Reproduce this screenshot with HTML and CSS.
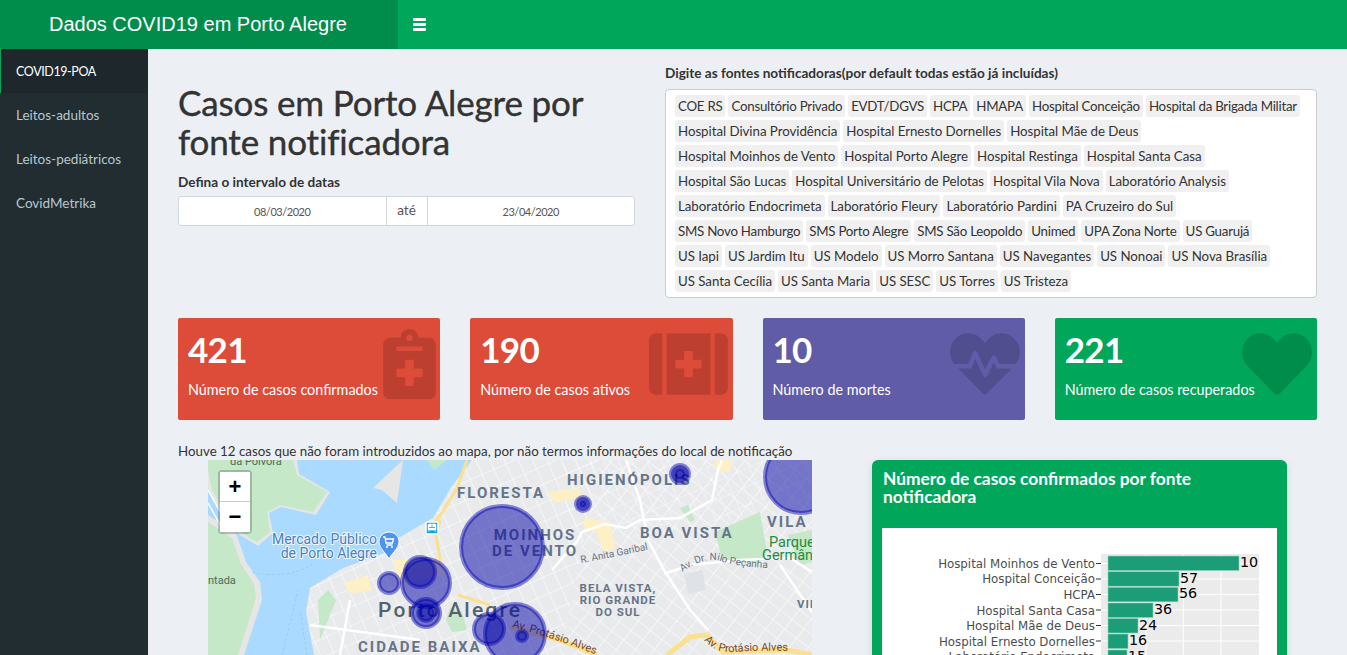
FILE: index.html
```html
<!DOCTYPE html>
<html lang="pt-BR">
<head>
  <meta charset="UTF-8">
  <title>Dados COVID19 em Porto Alegre</title>
  <meta name="viewport" content="width=device-width, initial-scale=1.0">
  <link rel="stylesheet" href="styles.css">
</head>
<body>

  <header class="navbar">
    <div class="brand">Dados COVID19 em Porto Alegre</div>
    <a class="toggle" href="#"><span></span><span></span><span></span></a>
  </header>

  <div class="wrapper">
    <nav class="sidebar">
      <a class="active" href="#">COVID19-POA</a>
      <a href="#">Leitos-adultos</a>
      <a href="#">Leitos-pediátricos</a>
      <a href="#">CovidMetrika</a>
    </nav>

    <main class="content">
      <section class="top-row">
        <div>
          <h1>Casos em Porto Alegre por fonte notificadora</h1>
          <label class="field-label">Defina o intervalo de datas</label>
          <div class="date-range">
            <div class="date-input">08/03/2020</div>
            <div class="date-sep">até</div>
            <div class="date-input">23/04/2020</div>
          </div>
        </div>
        <div>
          <label class="field-label label-tags">Digite as fontes notificadoras(por default todas estão já incluídas)</label>
          <div class="tags">
            <div class="tag-row tight"><span>COE RS</span><span>Consultório Privado</span><span>EVDT/DGVS</span><span>HCPA</span><span>HMAPA</span><span>Hospital Conceição</span><span>Hospital da Brigada Militar</span></div>
            <div class="tag-row"><span>Hospital Divina Providência</span><span>Hospital Ernesto Dornelles</span><span>Hospital Mãe de Deus</span></div>
            <div class="tag-row"><span>Hospital Moinhos de Vento</span><span>Hospital Porto Alegre</span><span>Hospital Restinga</span><span>Hospital Santa Casa</span></div>
            <div class="tag-row"><span>Hospital São Lucas</span><span>Hospital Universitário de Pelotas</span><span>Hospital Vila Nova</span><span>Laboratório Analysis</span></div>
            <div class="tag-row"><span>Laboratório Endocrimeta</span><span>Laboratório Fleury</span><span>Laboratório Pardini</span><span>PA Cruzeiro do Sul</span></div>
            <div class="tag-row tight"><span>SMS Novo Hamburgo</span><span>SMS Porto Alegre</span><span>SMS São Leopoldo</span><span>Unimed</span><span>UPA Zona Norte</span><span>US Guarujá</span></div>
            <div class="tag-row"><span>US Iapi</span><span>US Jardim Itu</span><span>US Modelo</span><span>US Morro Santana</span><span>US Navegantes</span><span>US Nonoai</span><span>US Nova Brasília</span></div>
            <div class="tag-row"><span>US Santa Cecília</span><span>US Santa Maria</span><span>US SESC</span><span>US Torres</span><span>US Tristeza</span></div>
          </div>
        </div>
      </section>

      <section class="stats">
        <div class="stat red">
          <strong>421</strong>
          <p>Número de casos confirmados</p>
          <svg class="stat-icon icon-notes" viewBox="0 0 384 512"><path d="M336 64h-80c0-35.3-28.7-64-64-64s-64 28.7-64 64H48C21.5 64 0 85.5 0 112v352c0 26.5 21.5 48 48 48h288c26.5 0 48-21.5 48-48V112c0-26.5-21.5-48-48-48zM192 40c13.3 0 24 10.7 24 24s-10.7 24-24 24-24-10.7-24-24 10.7-24 24-24zm96 304c0 4.4-3.6 8-8 8h-56v56c0 4.4-3.6 8-8 8h-48c-4.4 0-8-3.6-8-8v-56h-56c-4.4 0-8-3.6-8-8v-48c0-4.4 3.6-8 8-8h56v-56c0-4.4 3.6-8 8-8h48c4.4 0 8 3.6 8 8v56h56c4.4 0 8 3.6 8 8v48zm0-192c0 4.4-3.6 8-8 8H104c-4.4 0-8-3.6-8-8v-16c0-4.4 3.6-8 8-8h176c4.4 0 8 3.6 8 8v16z"/></svg>
        </div>
        <div class="stat red">
          <strong>190</strong>
          <p>Número de casos ativos</p>
          <svg class="stat-icon icon-aid" viewBox="0 0 576 512"><path d="M0 80v352c0 26.5 21.5 48 48 48h48V32H48C21.5 32 0 53.5 0 80zm128 400h320V32H128v448zm64-248c0-4.4 3.6-8 8-8h56v-56c0-4.4 3.6-8 8-8h48c4.4 0 8 3.6 8 8v56h56c4.4 0 8 3.6 8 8v48c0 4.4-3.6 8-8 8h-56v56c0 4.4-3.6 8-8 8h-48c-4.4 0-8-3.6-8-8v-56h-56c-4.4 0-8-3.6-8-8v-48zM528 32h-48v448h48c26.5 0 48-21.5 48-48V80c0-26.5-21.5-48-48-48z"/></svg>
        </div>
        <div class="stat purple">
          <strong>10</strong>
          <p>Número de mortes</p>
          <svg class="stat-icon icon-heart" viewBox="0 0 512 512"><path d="M320.2 243.8l-49.7 99.4c-6 12.1-23.4 11.7-28.9-.6l-56.9-126.3-30 71.7H60.6l182.5 186.5c7.1 7.3 18.6 7.3 25.7 0L451.4 288H342.3l-22.1-44.2zM473.7 73.9l-2.4-2.5c-51.5-52.6-135.8-52.6-187.4 0L256 100l-27.9-28.5c-51.5-52.7-135.9-52.7-187.4 0l-2.4 2.4C-10.4 123.7-12.5 203 31 256h102.4l35.9-86.2c5.4-12.9 23.6-13.2 29.4-.4l58.2 129.3 49-97.9c5.9-11.8 22.7-11.8 28.6 0l27.6 55.2H481c43.5-53 41.4-132.3-7.3-182.1z"/></svg>
        </div>
        <div class="stat green">
          <strong>221</strong>
          <p>Número de casos recuperados</p>
          <svg class="stat-icon icon-heart" viewBox="0 0 512 512"><path d="M462.3 62.6C407.5 15.9 326 24.3 275.7 76.2L256 96.5l-19.7-20.3C186.1 24.3 104.5 15.9 49.7 62.6c-62.8 53.6-66.1 149.8-9.9 207.9l193.5 199.8c12.5 12.9 32.8 12.9 45.3 0l193.5-199.8c56.3-58.1 53-154.3-9.8-207.9z"/></svg>
        </div>
      </section>

      <p class="map-note">Houve 12 casos que não foram introduzidos ao mapa, por não termos informações do local de notificação</p>

      <section class="bottom-row">
        <div class="map">
          <svg class="map-svg" viewBox="208 460 604 195" width="604" height="195">
            <defs>
              <pattern id="streets" width="13" height="17" patternUnits="userSpaceOnUse" patternTransform="rotate(-24)">
                <path d="M0 0H13M0 0V17" stroke="#fff" stroke-width="1.1" fill="none"/>
              </pattern>
              <pattern id="streets2" width="15" height="12" patternUnits="userSpaceOnUse" patternTransform="rotate(38)">
                <path d="M0 0H15M0 0V12" stroke="#fff" stroke-width="1.1" fill="none"/>
              </pattern>
              <path id="p-anita" d="M581 563 Q610 558 650 549"/>
              <path id="p-nilo" d="M682 572 Q705 556 720 561 T765 568"/>
              <path id="p-alves1" d="M512 627 Q555 638 610 660"/>
              <path id="p-alves2" d="M704 640 Q716 654 735 652 T800 651"/>
            </defs>

            <rect x="208" y="460" width="604" height="195" fill="#aadaff"/>

            <!-- margem esquerda -->
            <path d="M226 460H297L299 474 330 492 316 515 281 507 269 513 273 533 258 546 232 530 208 490V460Z" fill="#e6e6e4"/>
            <path d="M230 460H293L297 475 327 492 313 512 280 505 267 512 270 532 257 542 233 528 212 490 208 470V460Z" fill="#c4e8c8"/>
            <path d="M208 515 236 533 246 562 260 582 262 600 244 655H208Z" fill="#e6e6e4"/>
            <path d="M208 522 232 538 241 564 254 584 256 598 238 655H208Z" fill="#c4e8c8"/>
            <path d="M208 490 226 522M208 503 222 528" stroke="#fff" stroke-width="1.5" fill="none"/>
            <path d="M373 488 403 460 397 503 382 490Z" fill="#e6e6e4"/>
            <path d="M427 460H447L434 470Z" fill="#c4e8c8"/>
            <path d="M307 655 300 610" stroke="#9accf2" stroke-width="1" stroke-dasharray="3 2" fill="none"/>
            <path d="M252 572Q285 580 312 565M282 655 298 590" stroke="#9accf2" stroke-width="1" stroke-dasharray="3 2" fill="none"/>

            <!-- cidade -->
            <path id="land" d="M472 460 452 486 433 518 395 540 387 552 343 568 310 588 306 612 314 655H812V460Z" fill="#e9eaec"/>
            <path d="M472 460 452 486 433 518 395 540 387 552 343 568 310 588 306 612 314 655H560L600 460Z" fill="url(#streets)"/>
            <path d="M600 460H812V655H560Z" fill="url(#streets2)"/>
            <path d="M562 460H812V500L640 540 560 520Z" fill="url(#streets)" opacity=".7"/>

            <!-- parques e areas comerciais -->
            <path d="M715 532 760 512 767 552 760 563 723 562Z" fill="#c4e8c8"/>
            <path d="M788 535 812 530V562L800 565Z" fill="#c4e8c8"/>
            <path d="M680 508 688 505 695 520 690 522Z" fill="#c4e8c8"/>
            <path d="M450 608 462 612 467 630 452 632 446 620Z" fill="#c4e8c8"/>
            <path d="M318 600 328 590 336 600 320 640Z" fill="#c4e8c8"/>
            <path d="M547 492 578 488 584 497 555 503ZM584 518 610 522 615 548 604 552 596 532 584 530Z" fill="#fdf0c4"/>
            <path d="M344 583 368 575 372 590 350 594ZM394 560 440 558 445 575 398 585Z" fill="#fdf0c4"/>
            <path d="M715 460H732L730 472 716 470Z" fill="#fdf0c4"/>
            <path d="M684 574 702 570 706 590 688 594Z" fill="#dfe3e7"/>

            <!-- ruas principais -->
            <path d="M582 532 605 524 626 528 640 520 680 518 712 500 718 470 722 460M626 460 640 500 648 540 664 570 690 610 708 630M664 574 690 565 740 560 790 558 812 572M552 570 578 540 582 532M310 625 420 640M812 612 780 565M340 655 350 600" stroke="#fff" stroke-width="2.5" fill="none"/>
            <path d="M467 460 457 488 442 513 428 530M440 520 436 535 441 565M458 595 490 605" stroke="#fbe08f" stroke-width="3" fill="none"/>
            <path d="M667 655 690 637 707 635 723 652 787 650 812 655M510 627 560 640 597 655" stroke="#fbe08f" stroke-width="5" fill="none"/>

            <!-- rotulos -->
            <g class="map-district">
              <text x="457" y="498">FLORESTA</text>
              <text x="567" y="485">HIGIENÓPOLIS</text>
              <text x="640" y="538">BOA VISTA</text>
              <text x="767" y="527">VILA</text>
              <text x="535" y="540" text-anchor="middle">MOINHOS</text>
              <text x="535" y="556" text-anchor="middle">DE VENTO</text>
              <text x="358" y="652">CIDADE BAIXA</text>
            </g>
            <g class="map-small">
              <text x="618" y="592" text-anchor="middle">BELA VISTA,</text>
              <text x="618" y="604" text-anchor="middle">RIO GRANDE</text>
              <text x="618" y="616" text-anchor="middle">DO SUL</text>
              <text x="797" y="608">VIL</text>
            </g>
            <text x="378" y="617" class="map-city">Porto Alegre</text>
            <text class="map-road"><textPath href="#p-anita">R. Anita Garibaldi</textPath></text>
            <text class="map-road"><textPath href="#p-nilo">Av. Dr. Nilo Peçanha</textPath></text>
            <text class="map-alves"><textPath href="#p-alves1">Av. Protásio Alves</textPath></text>
            <text class="map-alves"><textPath href="#p-alves2">Av. Protásio Alves</textPath></text>
            <text x="377" y="544" class="map-poi" text-anchor="end">Mercado Público</text>
            <text x="377" y="558" class="map-poi" text-anchor="end">de Porto Alegre</text>
            <text x="769" y="547" class="map-park">Parque</text>
            <text x="762" y="560" class="map-park">Germânia</text>
            <text x="208" y="584" class="map-hood">ntada</text>
            <text x="230" y="465" class="map-hood">da Pólvora</text>

            <!-- pin e transporte -->
            <path d="M389 532c-5.500 0-10 4.300-10 9.700 0 6.500 7.500 12 10 17.300 2.500-5.300 10-10.800 10-17.300 0-5.400-4.500-9.700-10-9.700Z" fill="#4e94ef" stroke="#fff" stroke-width="1"/>
            <path d="M383 537h2l1 6h6.500l1-4h-8M386.500 545h6" stroke="#fff" stroke-width="1.300" fill="none"/>
            <circle cx="387" cy="547" r="1" fill="#fff"/>
            <circle cx="392" cy="547" r="1" fill="#fff"/>
            <rect x="426" y="522" width="12" height="12" rx="1.500" fill="#0aa5f0" stroke="#fff" stroke-width="1.500"/>
            <path d="M429 524h6a1 1 0 0 1 1 1v5h-8v-5a1 1 0 0 1 1-1ZM429.500 530l-1 2M434.500 530l1 2" fill="#fff" stroke="#fff" stroke-width=".6"/>
            <path d="M432 524.500v3M429 527.500h6" stroke="#0aa5f0" stroke-width=".8"/>

            <!-- casos -->
            <g class="cases">
              <circle cx="502" cy="547" r="41"/>
              <circle cx="801" cy="477" r="36"/>
              <circle cx="680" cy="474" r="9"/>
              <circle cx="680" cy="474" r="5"/>
              <circle cx="583" cy="504" r="7"/>
              <circle cx="583" cy="504" r="3"/>
              <circle cx="389" cy="583" r="10"/>
              <circle cx="426" cy="583" r="24"/>
              <circle cx="420" cy="572" r="15"/>
              <circle cx="426" cy="613" r="14"/>
              <circle cx="426" cy="613" r="8"/>
              <circle cx="489" cy="629" r="15"/>
              <circle cx="515" cy="634" r="30"/>
              <circle cx="522" cy="636" r="5"/>
            </g>
          </svg>
          <div class="zoom-control">
            <a href="#">+</a>
            <a href="#">−</a>
          </div>
        </div>

        <div class="chart-card">
          <h3>Número de casos confirmados por fonte notificadora</h3>
          <div class="chart-box">
            <svg class="chart-svg" viewBox="882 528 395 300" width="395" height="300">
              <rect x="1101" y="554" width="158" height="274" fill="#ebebeb"/>
              <path d="M1146 554V828M1183.300 554V828M1221 554V828" stroke="#fff" stroke-width="1"/>
              <g stroke="#fff" stroke-width="1">
                <path d="M1101 563.500H1259M1101 579H1259M1101 594.500H1259M1101 610H1259M1101 625.500H1259M1101 641H1259M1101 656.500H1259"/>
              </g>
              <g fill="#1b9e77" stroke="#8fd0bb" stroke-width=".6">
                <rect x="1108" y="556" width="131" height="14.500"/>
                <rect x="1108" y="571.700" width="71" height="14.500"/>
                <rect x="1108" y="587.300" width="70" height="14.500"/>
                <rect x="1108" y="603" width="45" height="14.500"/>
                <rect x="1108" y="618.500" width="30" height="14.500"/>
                <rect x="1108" y="634" width="20" height="14.500"/>
                <rect x="1108" y="650" width="19" height="14.500"/>
              </g>
              <g class="chart-ticks" stroke="#333" stroke-width="1">
                <path d="M1096 563.500H1101M1096 579H1101M1096 594.500H1101M1096 610H1101M1096 625.500H1101M1096 641H1101M1096 656.500H1101"/>
              </g>
              <g class="chart-labels" text-anchor="end">
                <text x="1095" y="568">Hospital Moinhos de Vento</text>
                <text x="1095" y="583">Hospital Conceição</text>
                <text x="1095" y="599">HCPA</text>
                <text x="1095" y="615">Hospital Santa Casa</text>
                <text x="1095" y="630">Hospital Mãe de Deus</text>
                <text x="1095" y="646">Hospital Ernesto Dornelles</text>
                <text x="1095" y="661">Laboratório Endocrimeta</text>
              </g>
              <g class="chart-values">
                <text x="1240" y="567">10</text>
                <text x="1180" y="583">57</text>
                <text x="1179" y="598">56</text>
                <text x="1154" y="614">36</text>
                <text x="1139" y="630">24</text>
                <text x="1129" y="645">16</text>
                <text x="1128" y="661">15</text>
              </g>
            </svg>
          </div>
        </div>
      </section>
    </main>
  </div>

</body>
</html>
```

FILE: styles.css
```css
* { box-sizing: border-box; }
html, body { height: 100%; }
body {
  margin: 0;
  overflow: hidden;
  font-family: Lato, "Noto Sans", sans-serif;
  font-size: 14px;
  color: #333;
  background: #ecf0f5;
}
a { text-decoration: none; }

/* navbar */
.navbar {
  display: flex;
  height: 49px;
  background: #00a65a;
}
.brand {
  width: 398px;
  padding-left: 49px;
  background: #008d4c;
  color: #fff;
  font-family: "Liberation Sans", Arial, sans-serif;
  font-size: 20px;
  line-height: 49px;
}
.toggle {
  display: flex;
  flex-direction: column;
  justify-content: center;
  gap: 2px;
  width: 44px;
  padding-left: 15px;
}
.toggle span {
  display: block;
  width: 13px;
  height: 3px;
  border-radius: 1px;
  background: #fff;
}

/* sidebar */
.wrapper {
  display: flex;
  height: calc(100% - 49px);
}
.sidebar {
  flex: 0 0 148px;
  background: #222d32;
}
.sidebar a {
  display: block;
  height: 44px;
  padding-left: 16px;
  color: #b8c7ce;
  font-size: 13.500px;
  line-height: 44px;
}
.sidebar a.active {
  background: #1e282c;
  border-left: 1px solid #00a65a;
  padding-left: 15px;
  color: #fff;
  font-size: 12.500px;
  letter-spacing: -.4px;
  line-height: 45px;
}

/* content */
.content {
  flex: 1;
  min-width: 0;
  height: 100%;
  overflow: hidden;
  padding: 15px 30px 0;
}
.top-row {
  display: grid;
  grid-template-columns: 457px 652px;
  gap: 30px;
}
h1 {
  margin: 19px 0 12px;
  font-size: 35px;
  font-weight: 400;
  line-height: 39px;
  letter-spacing: -.15px;
  -webkit-text-stroke: .4px #333;
}
.field-label {
  display: block;
  height: 20px;
  margin-bottom: 3px;
  font-size: 13.600px;
  font-weight: 700;
  line-height: 18px;
}
.label-tags { margin-bottom: 5px; }
.date-range {
  display: flex;
  height: 30px;
  margin-top: 2px;
  background: #fff;
  border: 1px solid #d2d6de;
  border-radius: 3px;
  text-align: center;
}
.date-input {
  flex: 1;
  font-size: 11px;
  letter-spacing: -.45px;
  line-height: 29px;
  color: #555;
}
.date-sep {
  width: 42px;
  border-left: 1px solid #d2d6de;
  border-right: 1px solid #d2d6de;
  font-size: 13.500px;
  line-height: 27px;
  color: #555;
}
.tags {
  display: flex;
  flex-direction: column;
  gap: 3px;
  height: 209px;
  padding: 5px 9px;
  background: #fff;
  border: 1px solid #ccc;
  border-radius: 4px;
}
.tag-row {
  display: flex;
  gap: 3px;
  white-space: nowrap;
}
.tags span {
  height: 22px;
  padding: 0 3px;
  background: #f0f0f0;
  border-radius: 3px;
  font-size: 13.300px;
  letter-spacing: -.04px;
  line-height: 22px;
  color: #333;
}
.tags .tight span { letter-spacing: -.25px; }

/* caixas de numeros */
.stats {
  display: grid;
  grid-template-columns: repeat(4, 1fr);
  gap: 30px;
  margin-top: 20px;
}
.stat {
  position: relative;
  height: 102px;
  padding: 10px;
  border-radius: 2px;
  color: #fff;
}
.stat strong {
  display: block;
  font-size: 35px;
  font-weight: 700;
  letter-spacing: -.7px;
  line-height: 43px;
}
.stat p {
  position: relative;
  margin: 9px 0 0;
  font-size: 14.350px;
  line-height: 20px;
}
.red { background: #dd4b39; }
.purple { background: #605ca8; }
.green { background: #00a65a; }
.stat-icon {
  position: absolute;
  right: 5px;
  top: 11px;
  width: 70px;
  height: 70px;
  fill: rgba(0, 0, 0, .15);
}
.icon-notes { width: 53px; right: 4px; }
.icon-aid { width: 79px; right: 5px; top: 11px; }

.map-note {
  margin: 21px 0 0;
  height: 19px;
  font-size: 13.330px;
  line-height: 20px;
}

/* mapa e grafico */
.bottom-row {
  display: flex;
  align-items: flex-start;
  padding-left: 30px;
}
.map {
  position: relative;
  width: 604px;
  height: 195px;
  overflow: hidden;
  background: #aadaff;
}
.map-svg { display: block; font-family: Roboto, sans-serif; }
.map-district text {
  font-size: 15px;
  font-weight: 700;
  letter-spacing: 2px;
  fill: #66748a;
}
.map-small text {
  font-size: 11.500px;
  font-weight: 700;
  letter-spacing: 1px;
  fill: #66748a;
}
.map-city {
  font-size: 21px;
  font-weight: 500;
  letter-spacing: 2.200px;
  fill: #56616f;
}
.map-road { font-size: 10px; fill: #6a7482; }
.map-alves { font-size: 11px; fill: #7b4a1e; }
.map-poi {
  font-size: 14px;
  fill: #4a7fc1;
  stroke: #fff;
  stroke-width: 2px;
  stroke-opacity: .8;
  paint-order: stroke;
}
.map-park { font-size: 14.500px; fill: #1e8e3e; }
.map-hood { font-size: 11px; fill: #4f6b55; }
.cases circle {
  fill: #0000a5;
  fill-opacity: .5;
  stroke: #0000b0;
  stroke-opacity: .45;
  stroke-width: 4;
}
.zoom-control {
  position: absolute;
  left: 10px;
  top: 10px;
  width: 34px;
  border: 2px solid rgba(0, 0, 0, .2);
  border-radius: 4px;
  background-clip: padding-box;
}
.zoom-control a {
  display: block;
  height: 30px;
  background: #fff;
  color: #000;
  font: bold 22px/30px "Liberation Sans", Arial, sans-serif;
  text-align: center;
}
.zoom-control a:first-child { border-bottom: 1px solid #ccc; }

.chart-card {
  width: 415px;
  height: 400px;
  margin-left: 60px;
  padding: 10px;
  background: #00a65a;
  border-radius: 6px;
  box-shadow: 0 2px 8px rgba(0, 0, 0, .1);
}
.chart-card h3 {
  height: 58px;
  margin: 0;
  padding-left: 1px;
  color: #fff;
  font-size: 17.350px;
  font-weight: 700;
  line-height: 18px;
}
.chart-box {
  background: #fff;
  height: 320px;
}
.chart-svg { display: block; }
.chart-labels { font-family: "DejaVu Sans", sans-serif; font-size: 11.800px; fill: #4d4d4d; }
.chart-values { font-family: "DejaVu Sans", sans-serif; font-size: 14.300px; fill: #000; }
```
